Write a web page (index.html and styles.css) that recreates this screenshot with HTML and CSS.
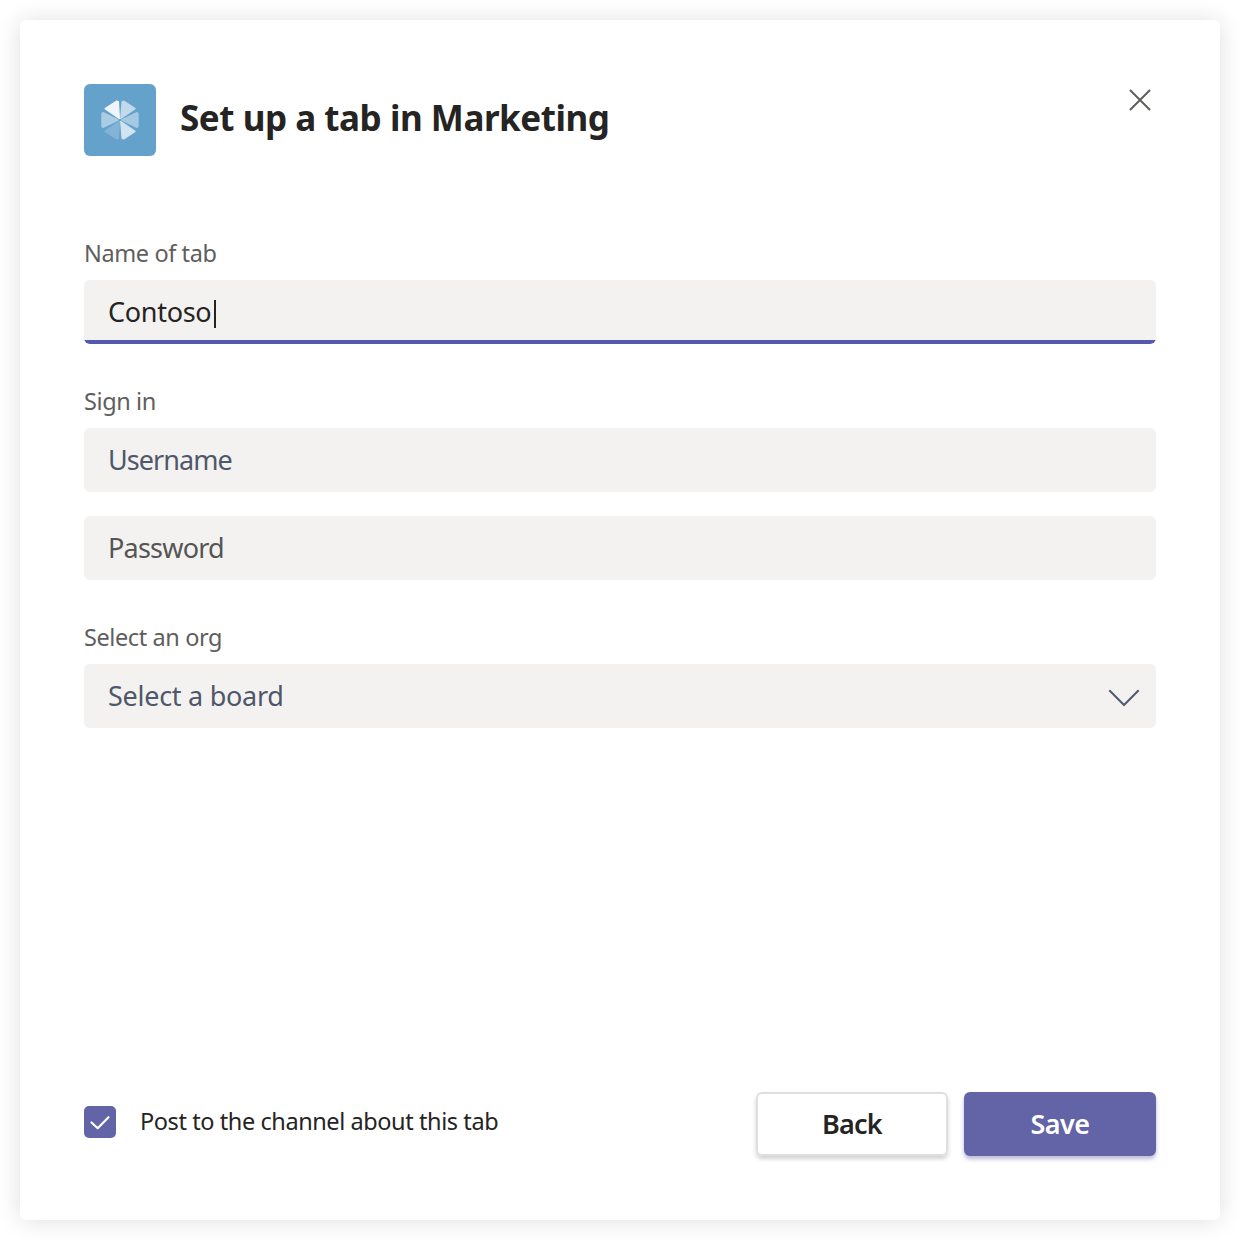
FILE: index.html
```html
<!DOCTYPE html>
<html lang="en">
<head>
<meta charset="utf-8">
<title>Set up a tab</title>
<link rel="stylesheet" href="styles.css">
</head>
<body>
<main class="dialog">
  <header class="header">
    <svg class="logo" viewBox="0 0 72 72" aria-hidden="true">
      <rect width="72" height="72" rx="6" fill="#64a2cc"/>
      <g fill="#fff" stroke="#fff" stroke-width="1.400" stroke-linejoin="round">
        <path opacity=".9" d="M35.300 34.500 21.200 24.600 32.800 17.200 34.300 17.600Z"/>
        <path opacity=".6" d="M36.800 34.500 38.200 17.600 39.700 17.200 51 24.600Z"/>
        <path opacity=".42" d="M38 36 53 28.600 54 29.500V42.500L53 43.400Z"/>
        <path opacity=".7" d="M36.800 37.500 51 47.400 39.700 54.800 38.200 54.400Z"/>
        <path opacity=".2" d="M35.300 37.500 34.300 54.400 32.800 54.800 21.200 47.400Z"/>
        <path opacity=".45" d="M34 36 19 28.600 18 29.500V42.500L19 43.400Z"/>
      </g>
    </svg>
    <h1 class="title">Set up a tab in Marketing</h1>
    <svg class="close" viewBox="0 0 32 32" role="button" aria-label="Close">
      <path d="M6 6 26 26M26 6 6 26" fill="none" stroke="#605e5c" stroke-width="2"/>
    </svg>
  </header>

  <section class="form">
    <div class="group">
      <div class="label">Name of tab</div>
      <div class="field field-active"><span class="value">Contoso</span><i class="caret"></i></div>
    </div>
    <div class="group">
      <div class="label">Sign in</div>
      <div class="field field-user">Username</div>
      <div class="field field-pass">Password</div>
    </div>
    <div class="group">
      <div class="label">Select an org</div>
      <div class="field field-board">
        <span>Select a board</span>
        <svg class="chevron" viewBox="0 0 32 20" aria-hidden="true">
          <path d="M1.300 2.300 16 17 30.700 2.300" fill="none" stroke="#505a6e" stroke-width="2"/>
        </svg>
      </div>
    </div>
  </section>

  <footer class="footer">
    <div class="check">
      <svg class="box" viewBox="0 0 32 32" aria-hidden="true">
        <rect width="32" height="32" rx="5" fill="#6264a7"/>
        <path d="M7.500 16.500 13.700 22.200 24.500 11.200" fill="none" stroke="#fff" stroke-width="2.200" stroke-linecap="round" stroke-linejoin="round"/>
      </svg>
      <span class="check-text">Post to the channel about this tab</span>
    </div>
    <div class="actions">
      <div class="button back" role="button">Back</div>
      <div class="button save" role="button">Save</div>
    </div>
  </footer>
</main>
</body>
</html>
```
FILE: styles.css
```css
* { box-sizing: border-box; }

body {
  margin: 0;
  padding: 20px;
  height: 1240px;
  background: #fff;
  font-family: "Noto Sans", "Open Sans", sans-serif;
  color: #252423;
}

.dialog {
  display: flex;
  flex-direction: column;
  height: 1200px;
  padding: 64px;
  border-radius: 6px;
  background: #fff;
  box-shadow: 0 1px 24px rgba(0, 0, 0, .13);
}

.header {
  display: flex;
  align-items: flex-start;
  height: 72px;
}

.logo { width: 72px; height: 72px; }

.title {
  flex: 1;
  margin: 0 0 0 24px;
  font-size: 35px;
  font-weight: 700;
  line-height: 68px;
  letter-spacing: -.46px;
  white-space: nowrap;
}

.close { width: 32px; height: 32px; }

.form {
  display: flex;
  flex-direction: column;
  flex: 1;
  gap: 40px;
  padding-top: 80px;
}

.group { display: flex; flex-direction: column; }

.label {
  height: 44px;
  font-size: 23.5px;
  line-height: 34px;
  letter-spacing: -.4px;
  color: #605e5c;
}

.field {
  display: flex;
  align-items: center;
  height: 64px;
  padding: 0 16px 0 24px;
  border-radius: 6px;
  background: #f3f2f1;
  font-size: 27px;
  line-height: 64px;
  color: #4f586b;
}

.field + .field { margin-top: 24px; }

.field-active {
  color: #252423;
  letter-spacing: -.3px;
  background: linear-gradient(#f3f2f1 60px, #5558af 60px);
}

.field-user { letter-spacing: -.95px; }

.field-pass { color: #555; letter-spacing: -.78px; }

.field-board { justify-content: space-between; letter-spacing: -.27px; }

.caret { width: 2px; height: 28px; margin: 4px 0 0 3px; background: #252423; }

.chevron { width: 32px; height: 20px; margin-top: 4px; }

.footer {
  display: flex;
  justify-content: space-between;
  height: 64px;
}

.check { display: flex; align-items: center; gap: 24px; height: 60px; }

.box { width: 32px; height: 32px; }

.check-text {
  padding-bottom: 2px;
  font-size: 23.5px;
  letter-spacing: -.42px;
  white-space: nowrap;
}

.actions { display: flex; gap: 16px; }

.button {
  width: 192px;
  height: 64px;
  border-radius: 6px;
  font-size: 27px;
  font-weight: 600;
  line-height: 64px;
  letter-spacing: -.8px;
  text-align: center;
}

.back {
  border: 2px solid #e1dfdd;
  line-height: 60px;
  box-shadow: 0 3px 4px rgba(0, 0, 0, .18);
}

.save {
  background: #6264a7;
  color: #fff;
  letter-spacing: -.5px;
  box-shadow: 0 3px 4px rgba(98, 100, 167, .45);
}
```
